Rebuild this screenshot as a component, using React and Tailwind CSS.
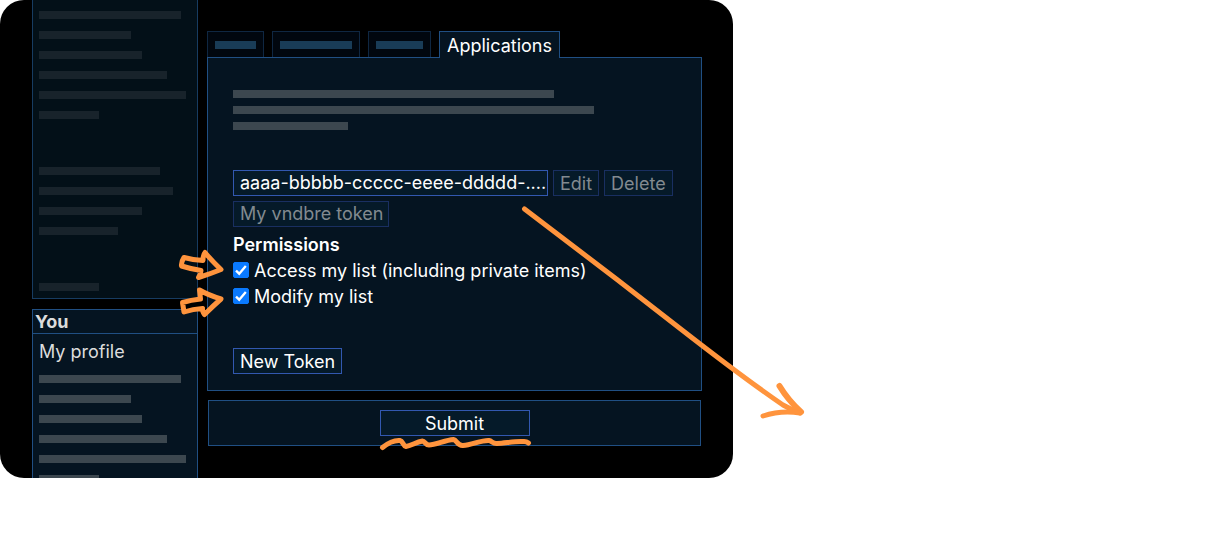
import React from "react";

function Bar({ className }) {
  return <div className={`h-2 max-w-full ${className}`} />;
}

function Check({ id, children }) {
  return (
    <div className="flex h-[26px] items-center gap-[5px]">
      <span className="grid h-4 w-4 shrink-0">
        <input
          id={id}
          type="checkbox"
          defaultChecked
          className="peer col-start-1 row-start-1 h-4 w-4 appearance-none rounded-xs border border-[#767676] bg-white checked:border-[#0a7aff] checked:bg-[#0a7aff]"
        />
        <svg
          viewBox="0 0 16 16"
          aria-hidden="true"
          className="pointer-events-none invisible col-start-1 row-start-1 h-4 w-4 peer-checked:visible"
        >
          <path d="M3 8.6 6.2 11.7 12.8 3.9" fill="none" stroke="#fff" strokeWidth="2.3" />
        </svg>
      </span>
      <label htmlFor={id} className="pt-0.5 leading-6 whitespace-nowrap">{children}</label>
    </div>
  );
}

function Sidebar() {
  return (
    <aside className="flex w-[166px] shrink-0 flex-col gap-2.5">
      <div className="flex flex-col gap-12 border border-t-0 border-[#173c61] bg-[#031018] pt-[11px] pb-[7px] pl-1.5">
        <div className="flex flex-col gap-3">
          <Bar className="w-[142px] bg-[#18232b]" />
          <Bar className="w-[92px] bg-[#18232b]" />
          <Bar className="w-[103px] bg-[#18232b]" />
          <Bar className="w-32 bg-[#18232b]" />
          <Bar className="w-[147px] bg-[#18232b]" />
          <Bar className="w-15 bg-[#18232b]" />
        </div>
        <div className="flex flex-col gap-3">
          <Bar className="w-[121px] bg-[#18232b]" />
          <Bar className="w-[134px] bg-[#18232b]" />
          <Bar className="w-[103px] bg-[#18232b]" />
          <Bar className="w-[79px] bg-[#18232b]" />
        </div>
        <Bar className="w-15 bg-[#18232b]" />
      </div>
      <nav className="border border-b-0 border-[#204f83] bg-[#051421] text-[#dcdcdc]">
        <h2 className="border-b border-[#204f83] pl-0.5 text-lg leading-[23px] font-bold">You</h2>
        <div className="flex flex-col gap-3 pt-1.5 pl-1.5">
          <a href="#profile" className="h-[23px] text-lg leading-6">My profile</a>
          <Bar className="w-[142px] bg-[#3c474f]" />
          <Bar className="w-[92px] bg-[#3c474f]" />
          <Bar className="w-[103px] bg-[#3c474f]" />
          <Bar className="w-32 bg-[#3c474f]" />
          <Bar className="w-[147px] bg-[#3c474f]" />
          <div className="h-[3px] w-15 bg-[#3c474f]" />
        </div>
      </nav>
    </aside>
  );
}

function Tabs() {
  const idle = "flex items-start border border-b-0 border-[#0f2742] bg-[#01070f] px-[7px] pt-[9px]";
  return (
    <div role="tablist" className="relative -mb-px flex h-[27px] items-start gap-2">
      <button role="tab" aria-label="Account" className={`h-[26px] ${idle}`}>
        <Bar className="w-[41px] bg-[#193c57]" />
      </button>
      <button role="tab" aria-label="Preferences" className={`h-[26px] ${idle}`}>
        <Bar className="w-18 bg-[#193c57]" />
      </button>
      <button role="tab" aria-label="Profile" className={`h-[26px] ${idle}`}>
        <Bar className="w-[47px] bg-[#193c57]" />
      </button>
      <button
        role="tab"
        aria-selected="true"
        className="h-[27px] border border-b-0 border-[#204f83] bg-[#051421] px-[7px] leading-7"
      >
        Applications
      </button>
    </div>
  );
}

const field = "h-[26px] border bg-[#051a29] whitespace-nowrap";
const buttonText = "px-1.5 pt-0.5 leading-[22px]";

function Annotations() {
  return (
    <svg
      aria-hidden="true"
      width="820"
      height="478"
      viewBox="0 0 820 478"
      className="pointer-events-none absolute top-0 left-0"
      fill="none"
      stroke="#ff943d"
      strokeWidth="5"
      strokeLinecap="round"
      strokeLinejoin="round"
    >
      <path d="M184 257.5Q193 260 203 260.5Q203 255 205 252.5Q211 260 221 269.5Q210 274 198.500 277.500Q201 274 201 270.500Q191 269 181.500 266Q181 262 184 257.500Z" />
      <path d="M182.500 302.500Q191 300 200.500 299Q200 294 199.500 290Q208 295 221 299Q213 306 204.500 314.500Q202 311 202.500 308.500Q193 309 184 312Z" />
      <path d="M524.500 209L617 279.500L682 330Q745 379 783 405Q792 410 800 413" />
      <path d="M779.500 386Q788 400 801 412" strokeWidth="6" />
      <path d="M763 416Q781 410 800 413" />
      <path d="M382.500 447.500C388 443 394 440 400 440.500C403 441 403 446 406 446.500C411 446 416 442 422.500 441C425 441 425 445 429 445C436 445 445 440 453.500 439.500C457 440 457 446 463 445.500C472 445 481 440 489 440.500C492 441 493 444 497 443.500C506 443 515 441 523 441.500Q526 441 528.500 443" />
    </svg>
  );
}

export default function App() {
  return (
    <div className="relative w-full max-w-[733px] font-['Inter','Liberation_Sans',sans-serif] text-lg text-white">
      <div className="flex gap-[9px] overflow-hidden rounded-3xl bg-black pr-[31px] pl-8">
        <Sidebar />
        <main className="min-w-0 flex-1 pt-[31px] pb-8">
          <Tabs />
          <section className="flex flex-col items-start border border-[#204f83] bg-[#051421] px-[25px] pt-8 pb-4">
            <div className="flex w-full flex-col gap-2">
              <Bar className="w-[321px] bg-[#3c474f]" />
              <Bar className="w-[361px] bg-[#3c474f]" />
              <Bar className="w-[115px] bg-[#3c474f]" />
            </div>
            <div className="mt-10 flex w-full gap-[5px]">
              <input
                aria-label="Token"
                readOnly
                defaultValue="aaaa-bbbbb-ccccc-eeee-ddddd-...."
                className={`w-[315px] min-w-0 border-[#3258b0] pl-1.5 ${field}`}
              />
              <button className={`border-[#192f61] text-[#828a90] ${field} ${buttonText}`}>Edit</button>
              <button className={`border-[#192f61] text-[#828a90] ${field} ${buttonText}`}>Delete</button>
            </div>
            <input
              aria-label="Token name"
              placeholder="My vndbre token"
              className={`mt-[5px] w-[156px] border-[#192f61] pl-1.5 placeholder:text-[#828a90] placeholder:opacity-100 ${field}`}
            />
            <fieldset className="mt-1">
              <legend className="h-[26px] leading-7 font-semibold">Permissions</legend>
              <Check id="access-list">Access my list (including private items)</Check>
              <Check id="modify-list">Modify my list</Check>
            </fieldset>
            <button className={`mt-[39px] border-[#3258b0] ${field} ${buttonText}`}>New Token</button>
          </section>
          <div className="mx-px mt-[9px] flex justify-center border border-[#204f83] bg-[#051421] py-[9px]">
            <button className={`w-[150px] border-[#3258b0] ${field} ${buttonText}`}>Submit</button>
          </div>
        </main>
      </div>
      <Annotations />
    </div>
  );
}
